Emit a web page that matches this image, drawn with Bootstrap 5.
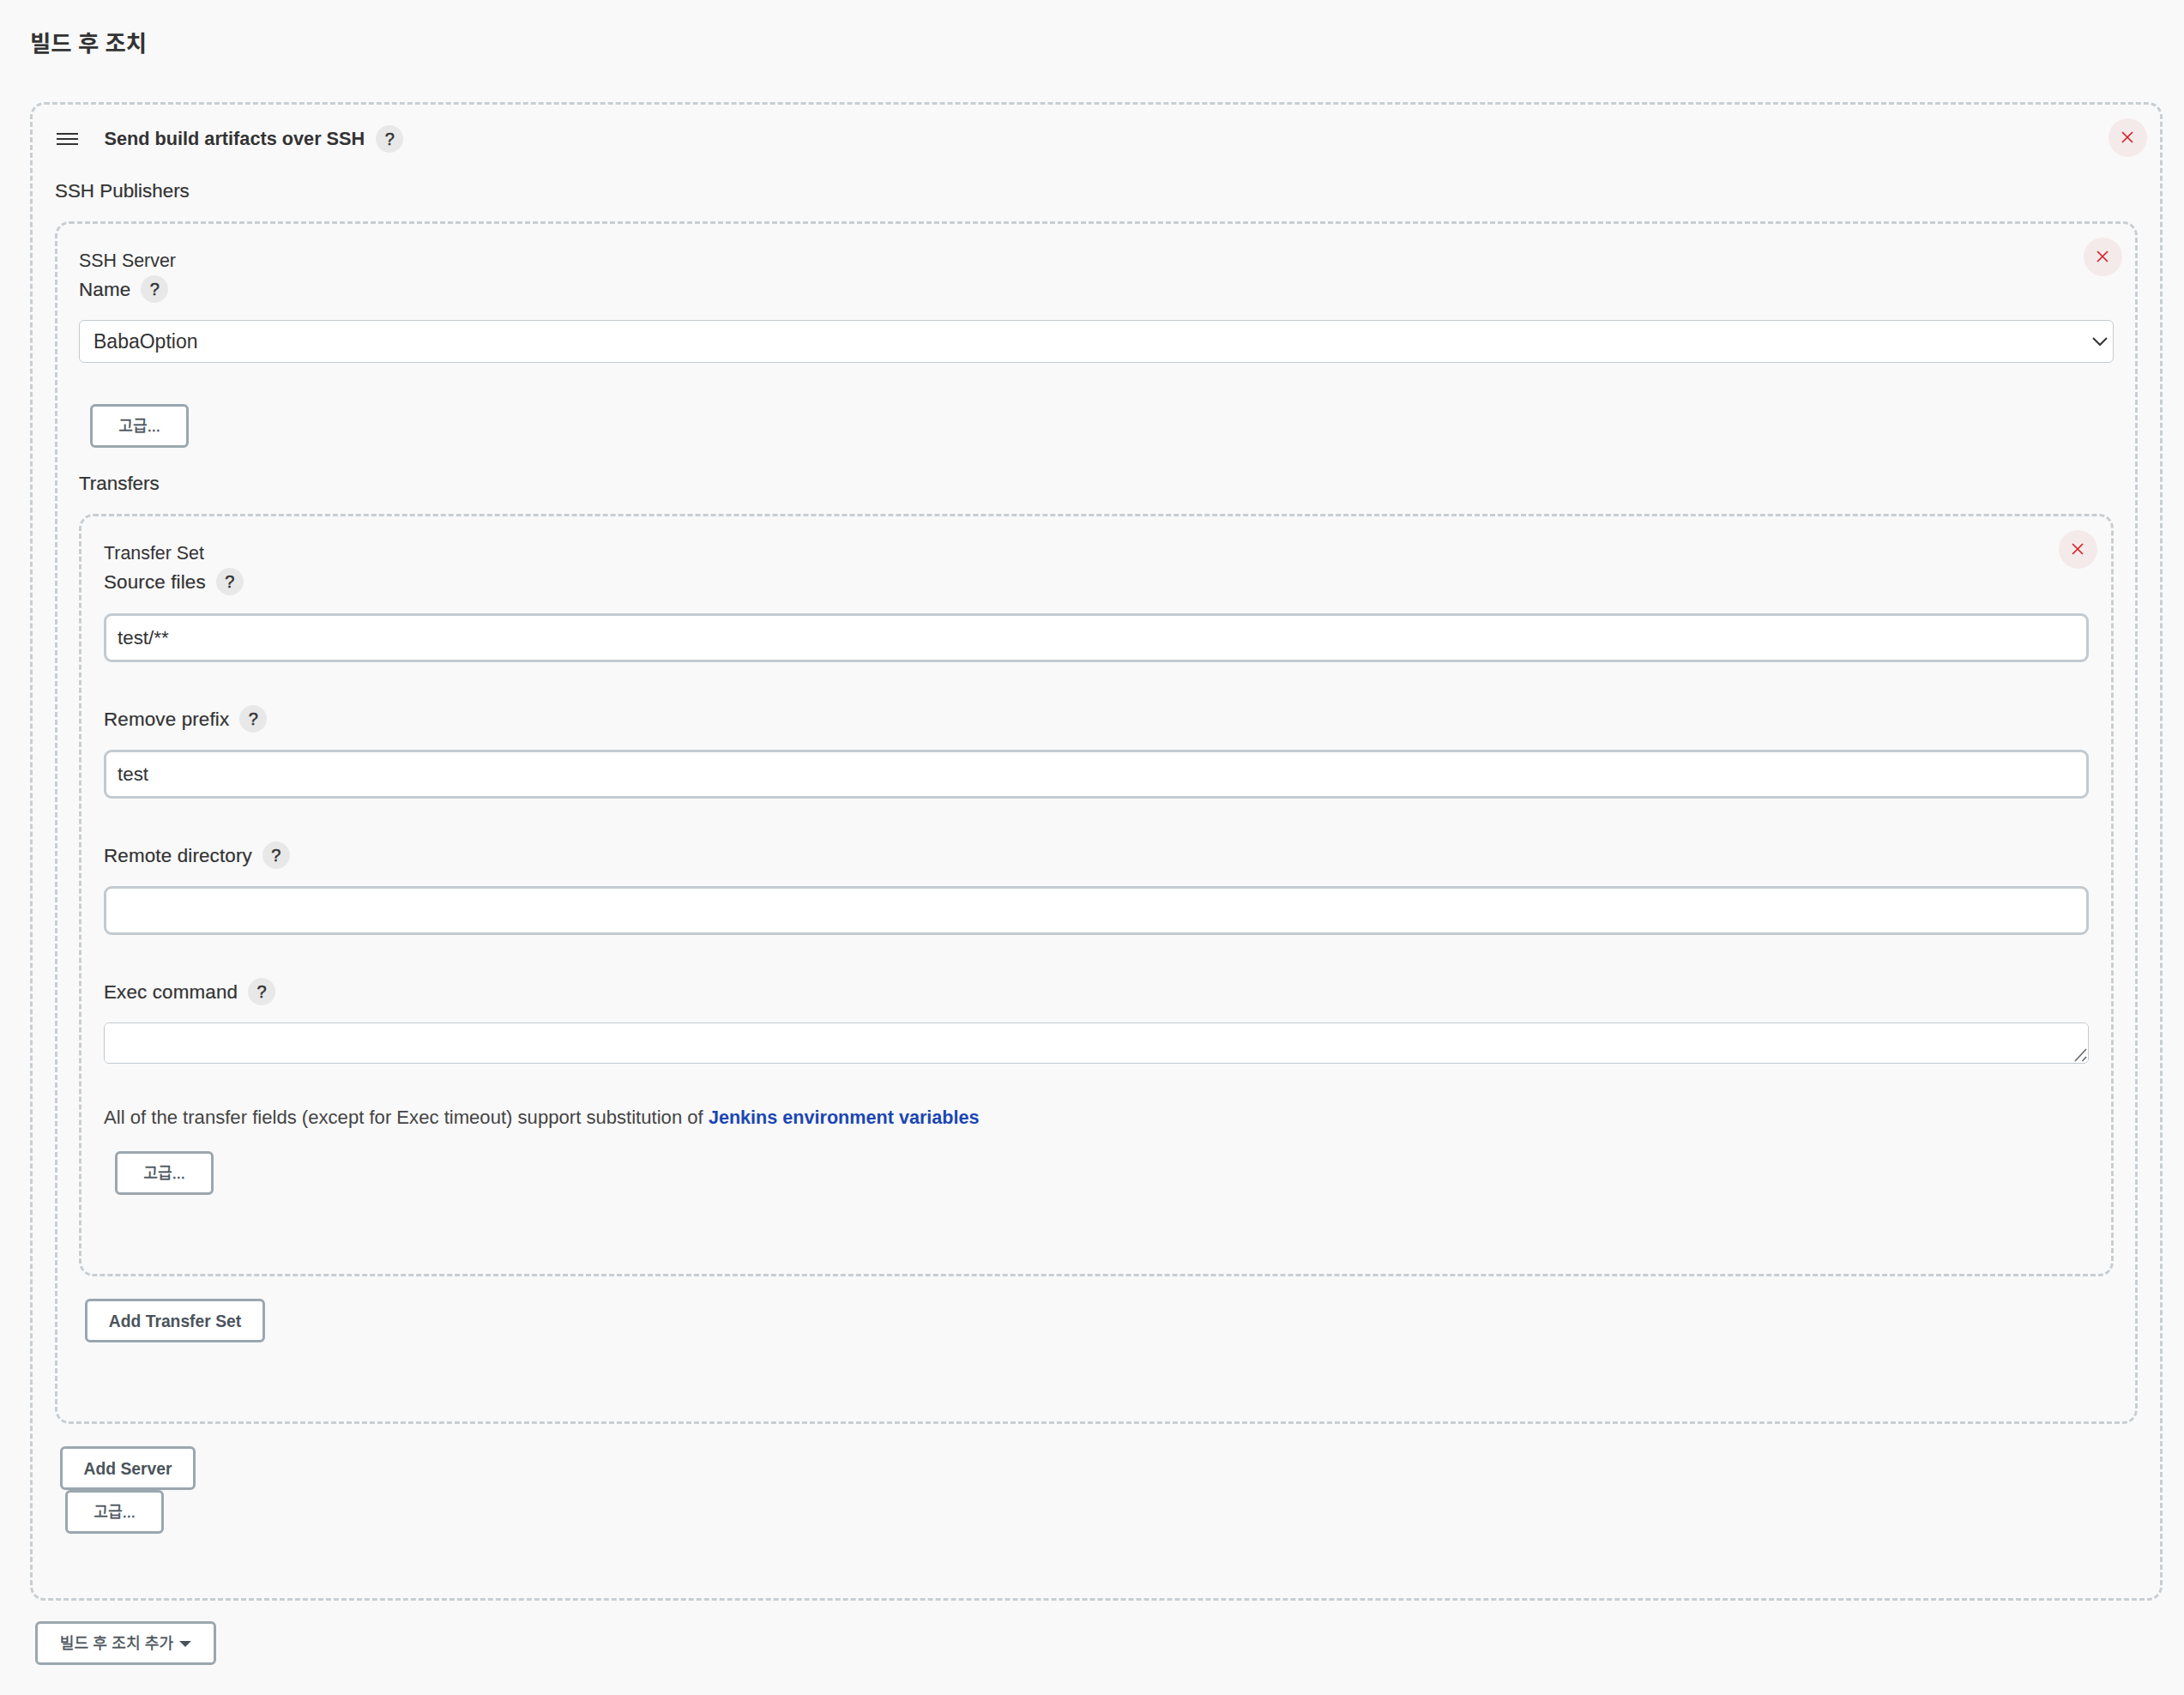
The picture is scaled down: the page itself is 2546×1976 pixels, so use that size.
<!DOCTYPE html>
<html lang="ko">
<head>
<meta charset="utf-8">
<title>빌드 후 조치</title>
<link href="https://cdn.jsdelivr.net/npm/bootstrap@5.3.0/dist/css/bootstrap.min.css" rel="stylesheet">
<style>
html, body { background: #f9f9fa; }
body { margin: 0; color: #333; font-family: "Liberation Sans", "Noto Sans CJK KR", sans-serif; font-size: 22.4px; line-height: 32px; }
.page-wrap { padding: 35px 25px 35px 35px; }
.sec-title { font-size: 26.4px; font-weight: 700; line-height: 32px; margin: 0 0 52px; color: #333; }
.dash-box { position: relative; border: 3px dashed #c8ced2; border-radius: 17px; padding: 0 26px; }
.dash-outer { padding-top: 24px; padding-bottom: 75px; }
.dash-server { margin-top: 20px; padding: 28px 25px 92px; }
.dash-transfer { margin-top: 20px; padding: 28px 26px 92px; }
.row-head { height: 32px; gap: 13px; }
.row-name { height: 32px; margin-top: 4px; gap: 12px; letter-spacing: .15px; -webkit-text-stroke: .2px #333; }
.row-name > span:first-child { padding-top: 2px; }
.row-gap { margin-top: 50px; }
.sub-label { height: 28px; line-height: 30px; font-size: 21.4px; }
.strong-label { height: 32px; margin-top: 28px; line-height: 34px; -webkit-text-stroke: .2px #333; }
.strong-label-b { height: 32px; margin-top: 25px; line-height: 34px; -webkit-text-stroke: .2px #333; }
.head-text { font-weight: 700; font-size: 21.7px; margin-left: 17.5px; }
.help-dot { width: 32px; height: 32px; border-radius: 50%; background: #e8e8e8; color: #333; font-size: 20px; font-weight: 400; line-height: 32px; text-align: center; flex: none; letter-spacing: 0; -webkit-text-stroke: .5px #333; }
.x-btn { position: absolute; top: 15.5px; right: 15.5px; width: 45px; height: 45px; border-radius: 50%; background: #f5eaea; border: 0; padding: 0; }
.x-btn-in { right: 16.5px; }
.x-btn svg { display: block; margin: auto; }
.jk-select.form-select { height: 50px; margin-top: 20px; padding: 1px 40px 0 16px; border: 1.5px solid #c3cacf; border-radius: 6px; font-size: 23px; color: #333; line-height: 1.2;
  background-size: 18px 11px; background-position: right 6px center; box-shadow: none;
  background-image: url("data:image/svg+xml,%3csvg xmlns='http://www.w3.org/2000/svg' viewBox='0 0 18 11'%3e%3cpath fill='none' stroke='%23333' stroke-width='2' d='M1 1l8 8 8-8'/%3e%3c/svg%3e"); }
.jk-input.form-control { height: 57px; margin-top: 21px; padding: 0 13px; border: 3px solid #c3cacf; border-radius: 9px; font-size: 22.4px; color: #333; box-shadow: none; }
.jk-input.next { margin-top: 20px; }
.area-wrap { position: relative; margin-top: 20px; }
.jk-area.form-control { display: block; height: 48px; min-height: 0; padding: 8px 13px; border: 1.5px solid #c3cacf; border-radius: 6px; font-size: 22.4px; box-shadow: none; resize: none; }
.grip-mark { position: absolute; right: 2px; bottom: 2px; pointer-events: none; }
.note-line { margin-top: 47px; height: 32px; color: #444; font-size: 22.1px; }
.note-line a { color: #1b46b4; font-size: 21.6px; font-weight: 700; text-decoration: none; }
.jk-btn.btn { display: flex; align-items: center; justify-content: center; height: 51px; padding: 2px 0 0; border: 3px solid #9ba7af; border-radius: 6px; background: #fff; color: #4b545c; font-size: 19.3px; font-weight: 700; line-height: 1; }
.jk-btn.b-adv { width: 115px; font-size: 18.2px; font-weight: 400; -webkit-text-stroke: .35px #4b545c; }
.b-adv-1 { margin: 48px 0 0 13px; }
.b-adv-2 { margin: 23px 0 0 13px; }
.jk-btn.b-transfer { width: 210px; padding-top: 3px; margin: 26px 0 0 7px; }
.jk-btn.b-server { width: 158px; padding-top: 3px; margin: 26px 0 0 6px; }
.b-adv-3 { margin: 0 0 0 12px; }
.jk-btn.b-add { width: 211px; margin: 24px 0 0 6px; font-size: 18.2px; font-weight: 400; -webkit-text-stroke: .35px #4b545c; }
.jk-btn.b-add.dropdown-toggle::after { margin-left: 7px; border-top: 7px solid #4b545c; border-left: 7px solid transparent; border-right: 7px solid transparent; border-bottom: 0; }
</style>
</head>
<body>
<div class="page-wrap">
  <h2 class="sec-title">빌드 후 조치</h2>

  <div class="dash-box dash-outer">
    <button type="button" class="x-btn" aria-label="삭제"><svg width="16" height="16" viewBox="0 0 16 16"><path d="M2 2l12 12M14 2L2 14" stroke="#d3222a" stroke-width="1.7" fill="none"/></svg></button>
    <div class="d-flex align-items-center row-head">
      <svg width="25" height="14" viewBox="0 0 25 14" style="margin-left:2px"><path d="M0 1h25M0 7h25M0 13h25" stroke="#333" stroke-width="2" fill="none"/></svg>
      <span class="head-text">Send build artifacts over SSH</span>
      <span class="help-dot">?</span>
    </div>
    <div class="strong-label">SSH Publishers</div>

    <div class="dash-box dash-server">
      <button type="button" class="x-btn" aria-label="삭제"><svg width="16" height="16" viewBox="0 0 16 16"><path d="M2 2l12 12M14 2L2 14" stroke="#d3222a" stroke-width="1.7" fill="none"/></svg></button>
      <div class="sub-label">SSH Server</div>
      <div class="d-flex align-items-center row-name"><span>Name</span><span class="help-dot">?</span></div>
      <select class="form-select jk-select"><option>BabaOption</option></select>
      <button type="button" class="btn jk-btn b-adv b-adv-1">고급...</button>
      <div class="strong-label-b">Transfers</div>

      <div class="dash-box dash-transfer">
        <button type="button" class="x-btn x-btn-in" aria-label="삭제"><svg width="16" height="16" viewBox="0 0 16 16"><path d="M2 2l12 12M14 2L2 14" stroke="#d3222a" stroke-width="1.7" fill="none"/></svg></button>
        <div class="sub-label">Transfer Set</div>
        <div class="d-flex align-items-center row-name"><span>Source files</span><span class="help-dot">?</span></div>
        <input class="form-control jk-input" type="text" value="test/**">
        <div class="d-flex align-items-center row-name row-gap"><span>Remove prefix</span><span class="help-dot">?</span></div>
        <input class="form-control jk-input next" type="text" value="test">
        <div class="d-flex align-items-center row-name row-gap"><span>Remote directory</span><span class="help-dot">?</span></div>
        <input class="form-control jk-input next" type="text" value="">
        <div class="d-flex align-items-center row-name row-gap"><span>Exec command</span><span class="help-dot">?</span></div>
        <div class="area-wrap">
          <textarea class="form-control jk-area" rows="1"></textarea>
          <svg class="grip-mark" width="15" height="16" viewBox="0 0 15 16"><path d="M1 15L14 1M9.500 15L14 10" stroke="#666" stroke-width="1.6" fill="none"/></svg>
        </div>
        <div class="note-line">All of the transfer fields (except for Exec timeout) support substitution of <a href="#">Jenkins environment variables</a></div>
        <button type="button" class="btn jk-btn b-adv b-adv-2">고급...</button>
      </div>
      <button type="button" class="btn jk-btn b-transfer">Add Transfer Set</button>
    </div>
    <button type="button" class="btn jk-btn b-server">Add Server</button>
    <button type="button" class="btn jk-btn b-adv b-adv-3">고급...</button>
  </div>
  <button type="button" class="btn jk-btn b-add dropdown-toggle">빌드 후 조치 추가</button>
</div>
<script src="https://cdn.jsdelivr.net/npm/bootstrap@5.3.0/dist/js/bootstrap.bundle.min.js"></script>
</body>
</html>
